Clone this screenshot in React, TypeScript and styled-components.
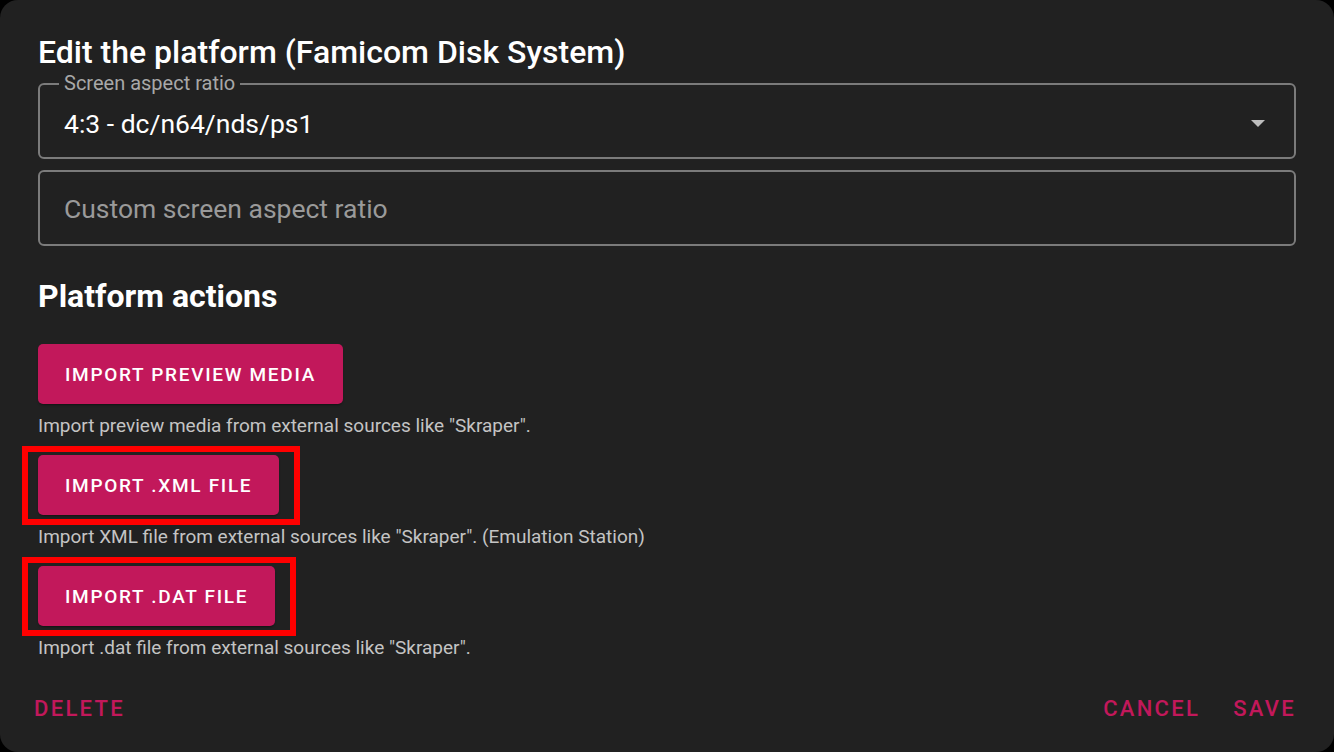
import styled, { createGlobalStyle } from 'styled-components';

const GlobalStyle = createGlobalStyle`
  html, body {
    margin: 0;
    padding: 0;
    background: #000;
  }
  * {
    box-sizing: border-box;
  }
`;

const PINK = '#c2185b';

const Dialog = styled.div`
  width: 1334px;
  height: 752px;
  background: #212121;
  border-radius: 18px;
  display: flex;
  flex-direction: column;
  font-family: Roboto, 'Liberation Sans', sans-serif;
  color: #fff;
  overflow: hidden;
`;

const Title = styled.h2`
  margin: 0;
  padding: 30px 38px 0;
  font-size: 32px;
  font-weight: 500;
  line-height: 44px;
`;

const Content = styled.div`
  flex: 1;
  padding: 0 38px;
  display: flex;
  flex-direction: column;
`;

const Field = styled.div<{ $top: number }>`
  position: relative;
  margin-top: ${({ $top }) => $top}px;
  padding: 0 29px 0 24px;
  height: 76px;
  border: 2px solid #7b7b7b;
  border-radius: 6px;
  display: flex;
  align-items: center;
`;

/* floating label sits in a notch cut into the top border */
const Label = styled.span`
  position: absolute;
  left: 19px;
  top: -13px;
  padding: 0 5px;
  background: #212121;
  font-size: 20px;
  line-height: 22px;
  color: #a8a8a8;
`;

const Value = styled.div`
  flex: 1;
  font-size: 26.5px;
  color: #fff;
  padding-top: 4px;
`;

const Placeholder = styled.div`
  flex: 1;
  font-size: 26.5px;
  color: #9a9a9a;
`;

const Arrow = styled.span`
  width: 0;
  height: 0;
  border-left: 7.5px solid transparent;
  border-right: 7.5px solid transparent;
  border-top: 7.5px solid #bdbdbd;
  margin-top: 4px;
`;

const Heading = styled.h3`
  margin: 32px 0 0;
  font-size: 32px;
  font-weight: 700;
  line-height: 36px;
`;

const Action = styled.div<{ $top: number }>`
  margin-top: ${({ $top }) => $top}px;
  display: flex;
  flex-direction: column;
  align-items: flex-start;
`;

const Highlight = styled.span<{ $on: boolean }>`
  position: relative;
  display: inline-flex;
  &::after {
    content: '';
    display: ${({ $on }) => ($on ? 'block' : 'none')};
    position: absolute;
    left: -16px;
    right: -21px;
    top: -9px;
    bottom: -10px;
    border: 6px solid #ff0000;
    pointer-events: none;
  }
`;

const Button = styled.button`
  height: 60px;
  padding: 0 27px;
  background: ${PINK};
  color: #fff;
  border: none;
  border-radius: 5px;
  font-family: Roboto, 'Liberation Sans', sans-serif;
  font-size: 19px;
  font-weight: 500;
  letter-spacing: 1.7px;
  text-transform: uppercase;
  box-shadow: 0 3px 1px -2px rgba(0, 0, 0, 0.2), 0 2px 2px rgba(0, 0, 0, 0.14);
`;

const Hint = styled.p`
  margin: 11px 0 0;
  font-size: 19px;
  line-height: 22px;
  color: #c4c4c4;
`;

const Footer = styled.div`
  display: flex;
  align-items: center;
  padding: 0 38px 0 34px;
  height: 88px;
`;

const TextButton = styled.button`
  background: none;
  border: none;
  padding: 0;
  color: ${PINK};
  font-family: Roboto, 'Liberation Sans', sans-serif;
  font-size: 22px;
  font-weight: 500;
  letter-spacing: 2.3px;
  text-transform: uppercase;
`;

const Spacer = styled.div`
  flex: 1;
`;

const RightGroup = styled.div`
  display: flex;
  gap: 33px;
`;

const actions = [
  {
    label: 'Import preview media',
    hint: 'Import preview media from external sources like "Skraper".',
    marked: false,
    top: 30,
  },
  {
    label: 'Import .xml file',
    hint: 'Import XML file from external sources like "Skraper". (Emulation Station)',
    marked: true,
    top: 18,
  },
  {
    label: 'Import .dat file',
    hint: 'Import .dat file from external sources like "Skraper".',
    marked: true,
    top: 18,
  },
];

const App = () => {
  return (
    <>
      <GlobalStyle />
      <Dialog>
        <Title>Edit the platform (Famicom Disk System)</Title>
        <Content>
          <Field $top={9}>
            <Label>Screen aspect ratio</Label>
            <Value>4:3 - dc/n64/nds/ps1</Value>
            <Arrow />
          </Field>
          <Field $top={11}>
            <Placeholder>Custom screen aspect ratio</Placeholder>
          </Field>
          <Heading>Platform actions</Heading>
          {actions.map((a) => (
            <Action key={a.label} $top={a.top}>
              <Highlight $on={a.marked}>
                <Button>{a.label}</Button>
              </Highlight>
              <Hint>{a.hint}</Hint>
            </Action>
          ))}
        </Content>
        <Footer>
          <TextButton>Delete</TextButton>
          <Spacer />
          <RightGroup>
            <TextButton>Cancel</TextButton>
            <TextButton>Save</TextButton>
          </RightGroup>
        </Footer>
      </Dialog>
    </>
  );
};

export default App;
